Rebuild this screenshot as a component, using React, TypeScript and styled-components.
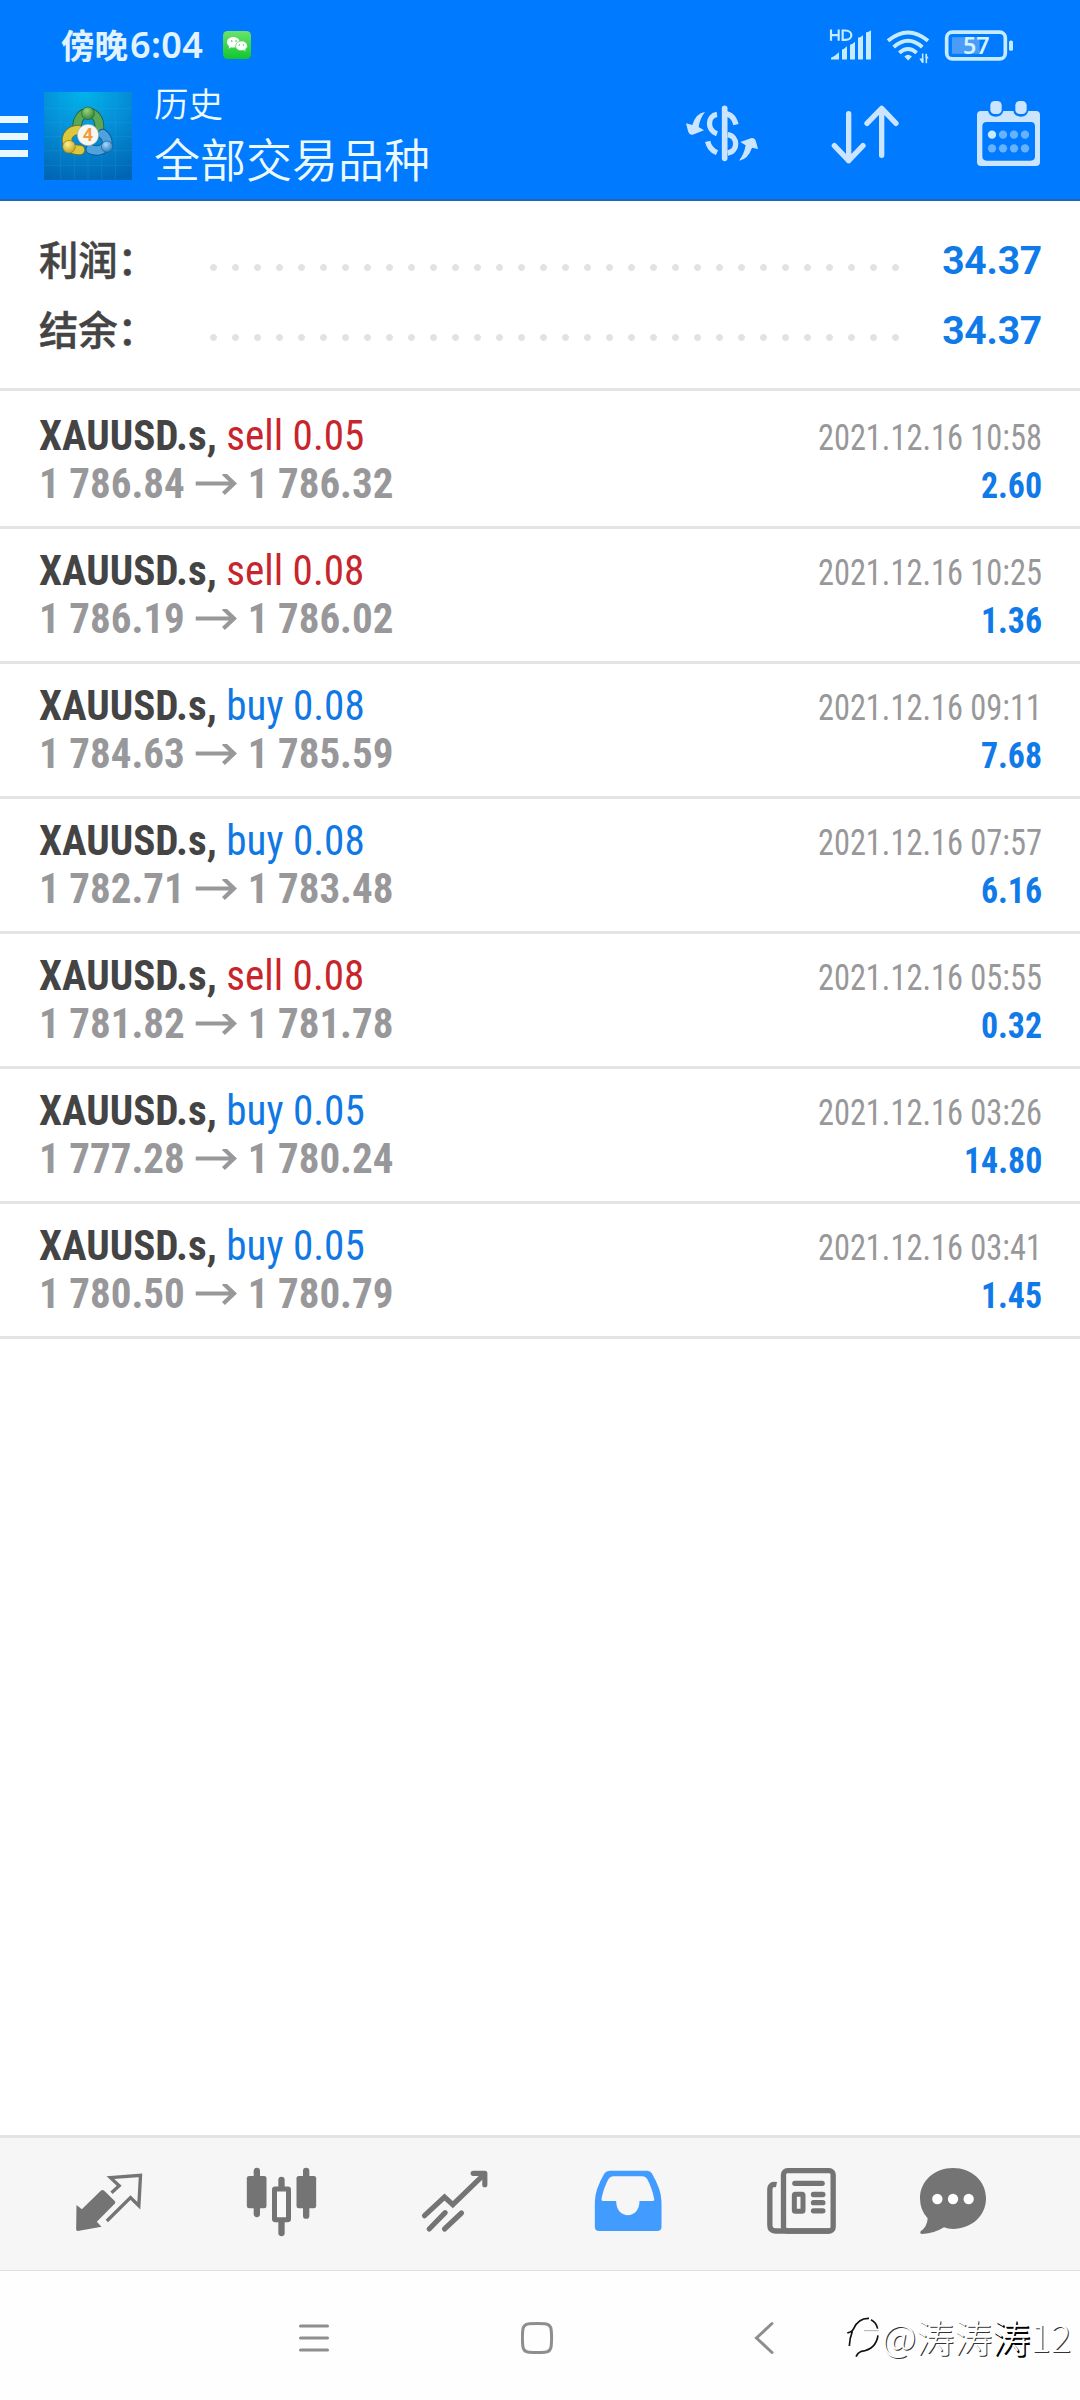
import React from 'react';
import styled, { createGlobalStyle } from 'styled-components';

const GlobalStyle = createGlobalStyle`
  * { box-sizing: border-box; }
  body { margin: 0; background: #fff; }
`;

const cjk = `"Noto Sans CJK SC", sans-serif`;
const condensed = `"Roboto Condensed", Roboto, ${cjk}`;

const Screen = styled.div`
  width: 1080px;
  height: 2400px;
  display: flex;
  flex-direction: column;
  background: #fff;
  overflow: hidden;
  font-family: Roboto, ${cjk};
`;

const Header = styled.header`
  height: 201px;
  flex: none;
  background: #007aff;
  border-bottom: 2px solid #1c68b4;
`;

const StatusBar = styled.div`
  height: 90px;
  display: flex;
  align-items: center;
  padding: 0 65px 0 61px;
`;

const Clock = styled.div`
  display: flex;
  align-items: baseline;
  margin-bottom: 2px;
  color: #e2f3ff;
  font: 700 33.5px/44px ${cjk};
  white-space: nowrap;
`;

const Digits = styled.span`
  font: 600 36px/44px "Noto Sans", sans-serif;
  letter-spacing: 0.4px;
  margin-left: 2px;
`;

const WeChat = styled.svg`
  width: 28px;
  height: 28px;
  margin-left: 20px;
`;

const StatusIcons = styled.div`
  margin-left: auto;
  display: flex;
  gap: 12px;
  color: #c4ebff;
`;

const StatusIcon = styled.svg<{ $w: number }>`
  width: ${(p) => p.$w}px;
  height: 37px;
`;

const Toolbar = styled.div`
  height: 92px;
  display: flex;
  align-items: center;
  padding-right: 32px;
`;

const MenuButton = styled.div`
  width: 28px;
  display: flex;
  flex-direction: column;
  gap: 10px;
`;

const MenuBar = styled.span`
  height: 7px;
  background: #eaf8ff;
`;

const AppLogo = styled.svg`
  width: 88px;
  height: 88px;
  margin-left: 16px;
`;

const Titles = styled.div`
  margin: 0 0 6px 22px;
  flex: 1;
  color: #ecfaff;
  font-family: ${cjk};
  font-weight: 350;
`;

const Overline = styled.div`
  font-size: 34.5px;
  line-height: 48px;
`;

const Title = styled.div`
  font-size: 46px;
  line-height: 62px;
`;

const ToolIcons = styled.div`
  display: flex;
  gap: 68px;
  color: #cce5ff;
`;

const ToolIcon = styled.svg`
  width: 76px;
  height: 80px;
`;

const Summary = styled.section`
  height: 190px;
  flex: none;
  padding: 25px 38px 0 39px;
  border-bottom: 3px solid #e4e4e4;
`;

const SummaryRow = styled.div`
  height: 70px;
  display: flex;
  align-items: center;
`;

const SummaryLabel = styled.div`
  width: 171px;
  margin-bottom: 6px;
  font: 500 39.3px/64px ${cjk};
  color: #444;
  -webkit-text-stroke: 0.5px #444;
`;

const Leader = styled.div`
  flex: none;
  width: 704px;
  height: 7px;
  margin-top: 13px;
  background: radial-gradient(circle at 3.5px 3.5px, #e2e2e2 3px, transparent 3.8px) 0 0 / 22px 7px repeat-x;
`;

const SummaryValue = styled.div`
  margin-left: auto;
  font: 700 39px/70px Roboto, sans-serif;
  letter-spacing: -0.2px;
  color: #0f7ae8;
`;

const Deals = styled.main`
  flex: 1;
  padding-top: 3px;
`;

const Deal = styled.div`
  height: 135px;
  padding: 17px 38px 0 39px;
  border-bottom: 3px solid #e4e4e4;
  font-family: ${condensed};
  font-stretch: 75%;
`;

const Line = styled.div`
  height: 48px;
  line-height: 48px;
  display: flex;
  align-items: baseline;
  justify-content: space-between;
  white-space: nowrap;
`;

const Instrument = styled.div`
  font-size: 43px;
  font-weight: 700;
  color: #444;
  transform: scaleX(0.956);
  transform-origin: left;
`;

const Side = styled.span<{ $buy: boolean }>`
  font-weight: 400;
  color: ${(p) => (p.$buy ? '#1078e4' : '#c8242c')};
`;

const Prices = styled.div`
  font-size: 43px;
  font-weight: 700;
  color: #98989a;
  transform: scaleX(0.954);
  transform-origin: left;
`;

const PriceArrow = styled.svg`
  width: 44px;
  height: 24px;
  margin: 0 11px 0 11px;
`;

const Time = styled.div`
  font-size: 36px;
  color: #98989a;
  transform: scaleX(0.9);
  transform-origin: right;
`;

const Profit = styled.div`
  font-size: 36px;
  font-weight: 700;
  color: #0f7ae8;
  transform: scaleX(0.94);
  transform-origin: right;
`;

const TabBar = styled.nav`
  height: 136px;
  flex: none;
  display: grid;
  grid-template-columns: repeat(5, 173px) 132px;
  justify-items: center;
  padding: 22px 0 0 22px;
  background: #f6f6f6;
  border-top: 3px solid #e4e4e4;
  border-bottom: 1px solid #e0e0e0;
`;

const TabIcon = styled.svg<{ $active?: boolean }>`
  width: 84px;
  height: 84px;
  color: ${(p) => (p.$active ? '#429cff' : '#747474')};
`;

const SystemNav = styled.div`
  position: relative;
  height: 129px;
  flex: none;
  display: flex;
  align-items: center;
  padding: 5px 0 0 296px;
  gap: 189px;
  background: #fefefe;
`;

const NavIcon = styled.svg`
  width: 36px;
  height: 36px;
  fill: none;
  stroke: #8e8e8e;
  stroke-width: 3;
  stroke-linecap: round;
`;

const Watermark = styled.div`
  position: absolute;
  right: 9px;
  bottom: 37px;
  display: flex;
  align-items: center;
  font: 300 38px/54px ${cjk};
  color: #fff;
  text-shadow: 1px 1px 0.5px #333;
`;

const WatermarkStrong = styled.span`
  text-shadow: 1px 1px 0 #000, 1.5px 1.5px 0 #000;
`;

const WatermarkLogo = styled.svg`
  width: 36px;
  height: 44px;
`;

const deals = [
  { side: 'sell', lot: '0.05', open: '1 786.84', close: '1 786.32', time: '2021.12.16 10:58', profit: '2.60' },
  { side: 'sell', lot: '0.08', open: '1 786.19', close: '1 786.02', time: '2021.12.16 10:25', profit: '1.36' },
  { side: 'buy', lot: '0.08', open: '1 784.63', close: '1 785.59', time: '2021.12.16 09:11', profit: '7.68' },
  { side: 'buy', lot: '0.08', open: '1 782.71', close: '1 783.48', time: '2021.12.16 07:57', profit: '6.16' },
  { side: 'sell', lot: '0.08', open: '1 781.82', close: '1 781.78', time: '2021.12.16 05:55', profit: '0.32' },
  { side: 'buy', lot: '0.05', open: '1 777.28', close: '1 780.24', time: '2021.12.16 03:26', profit: '14.80' },
  { side: 'buy', lot: '0.05', open: '1 780.50', close: '1 780.79', time: '2021.12.16 03:41', profit: '1.45' },
];

const WeChatIcon = () => (
  <WeChat viewBox="0 0 84 84">
    <defs>
      <linearGradient id="wc" x1="0" y1="0" x2="0" y2="1">
        <stop offset="0" stopColor="#6be36c" />
        <stop offset="1" stopColor="#10c62f" />
      </linearGradient>
    </defs>
    <rect width="84" height="84" rx="14" fill="url(#wc)" />
    <path d="M31 18c-11 0-19 7-19 16 0 5 3 9 7 12l-2 7 7-4c9 2 26 1 26-15 0-9-8-16-19-16z" fill="#fff" />
    <path d="M55 30c10 0 18 6 18 15 0 5-3 8-6 10l2 7-7-4c-12 3-24-2-24-13 0-9 8-15 17-15z" fill="#fff" stroke="#47d552" strokeWidth="2" />
    <g fill="#3fcf4e">
      <circle cx="26" cy="30" r="2.6" /><circle cx="39" cy="30" r="2.6" />
      <circle cx="49" cy="42" r="2.2" /><circle cx="61" cy="42" r="2.2" />
    </g>
  </WeChat>
);

const SignalIcon = () => (
  <StatusIcon $w={45} viewBox="504 79.5 135 111" fill="currentColor">
    <g fill="none" stroke="currentColor" strokeWidth="6.5">
      <path d="M513 87v34M536 87v34M513 104h23M548 90v28h8c24 0 24-28 0-28z" />
    </g>
    <path d="M513 172q10-4 24-17v22h-24zM546 147q6-1 15-10v40h-15zM570 133q8-2 15-9v53h-15zM594 112q8-2 15-8v73h-15zM618 96q8-2 15-7v88h-15z" />
  </StatusIcon>
);

const WifiIcon = () => (
  <StatusIcon $w={46} viewBox="675 79.5 138 111" fill="none" stroke="currentColor" strokeWidth="11.5">
    <path d="M684 121Q744 71 804 121M701 140Q744 102 787 140M718 157Q744 134 770 157" />
    <path d="M733 168q11-11 23 0l-11.500 12z" fill="currentColor" stroke="none" />
    <path d="M788 159v28M799 160v28" strokeWidth="4.500" />
    <path d="M778 174l8 13h4v-13zM797 160l9 14h-9z" fill="currentColor" stroke="none" />
  </StatusIcon>
);

const BatteryText = styled.text`
  font: 600 70px "Noto Sans", sans-serif;
`;

const BatteryIcon = () => (
  <StatusIcon $w={72} viewBox="849 79.5 216 111">
    <rect x="876" y="110" width="83" height="50" fill="#4a9cf6" />
    <rect x="860" y="95" width="176" height="80" rx="17" fill="none" stroke="currentColor" strokeWidth="11" />
    <rect x="1047" y="120" width="12" height="31" rx="5" fill="currentColor" />
    <BatteryText x="949" y="161" textAnchor="middle" textLength="80" lengthAdjust="spacingAndGlyphs" fill="#d4f2ff">57</BatteryText>
  </StatusIcon>
);

const LogoText = styled.text`
  font: 700 52px "Open Sans", sans-serif;
`;

const Logo = () => (
  <AppLogo viewBox="42 36 264 264">
    <defs>
      <radialGradient id="bg" cx="0.45" cy="0" r="1.05">
        <stop offset="0" stopColor="#00b4ea" />
        <stop offset="0.45" stopColor="#0590d8" />
        <stop offset="1" stopColor="#0066b4" />
      </radialGradient>
      <radialGradient id="gr" cx="0.4" cy="0.3" r="0.8"><stop offset="0" stopColor="#9ad47c" /><stop offset="1" stopColor="#2a7a32" /></radialGradient>
      <radialGradient id="ye" cx="0.4" cy="0.3" r="0.8"><stop offset="0" stopColor="#fff08a" /><stop offset="1" stopColor="#b89a1c" /></radialGradient>
      <radialGradient id="bl" cx="0.4" cy="0.3" r="0.8"><stop offset="0" stopColor="#a6dcff" /><stop offset="1" stopColor="#1a6cb0" /></radialGradient>
    </defs>
    <rect x="42" y="36" width="264" height="264" fill="url(#bg)" />
    <path d="M92 36v264M133 36v264M174 36v264M215 36v264M256 36v264M42 86h264M42 128h264M42 170h264M42 212h264M42 256h264" stroke="#35b4e8" strokeOpacity="0.28" strokeWidth="2" />
    <g fill="none" strokeLinecap="round">
      <path d="M142 146C136 84 212 80 208 146" stroke="#1f5a48" strokeWidth="29" />
      <path d="M142 146C136 84 212 80 208 146" stroke="#5aa854" strokeWidth="24" />
      <path d="M144 150C100 152 98 212 150 210" stroke="#6c7430" strokeWidth="31" />
      <path d="M144 150C100 152 98 212 150 210" stroke="#dcc83c" strokeWidth="26" />
      <path d="M218 162C252 190 216 222 182 208" stroke="#105490" strokeWidth="31" />
      <path d="M218 162C252 190 216 222 182 208" stroke="#4ea2de" strokeWidth="26" />
    </g>
    <circle cx="174" cy="100" r="19" fill="url(#gr)" stroke="#216a30" strokeWidth="2" />
    <circle cx="117" cy="200" r="19" fill="url(#ye)" stroke="#867820" strokeWidth="2" />
    <circle cx="231" cy="200" r="17" fill="url(#bl)" stroke="#1a6098" strokeWidth="2" />
    <circle cx="174" cy="165" r="32" fill="#f6f6f2" stroke="#8a9a90" strokeWidth="1.500" />
    <LogoText x="174" y="184" textAnchor="middle" fill="#f39a3a">4</LogoText>
  </AppLogo>
);

const DollarIcon = () => (
  <ToolIcon viewBox="72 288 228 240" fill="currentColor">
    <path d="M194 325v150" stroke="currentColor" strokeWidth="17" strokeLinecap="round" />
    <g fill="none" stroke="currentColor" strokeWidth="16">
      <path d="M171 343C143 347 139 390 171 401M143 424Q148 448 171 458" />
      <path d="M194 341Q220 342 228 374M203 404C234 408 236 454 203 459" />
    </g>
    <path d="M135 336Q108 339 97 375L78 370 84 393Q87 405 98 404L132 391 116 381Q120 354 135 336z" />
    <path d="M237 482Q264 478 276 443L294 447 288 425Q285 413 275 414L241 426 257 436Q252 464 237 482z" />
  </ToolIcon>
);

const SortIcon = () => (
  <ToolIcon viewBox="504 288 228 240" fill="none" stroke="currentColor" strokeWidth="16" strokeLinecap="round" strokeLinejoin="round">
    <path d="M566 341v141M523 437l43 45 43-45M665 466V325M621 370l44-45 43 45" />
  </ToolIcon>
);

const CalendarIcon = () => (
  <ToolIcon viewBox="936 288 228 240">
    <path d="M963 333H984Q988 350 1007 350 1026 350 1030 333H1060Q1064 350 1083 350 1101 350 1105 333H1128Q1140 333 1140 345V486Q1140 498 1128 498H963Q951 498 951 486V345Q951 333 963 333zM980 366Q967 366 967 379V469Q967 482 980 482H1112Q1125 482 1125 469V379Q1125 366 1112 366z" fill="currentColor" fillRule="evenodd" />
    <rect x="991" y="303" width="34" height="39" rx="13" fill="currentColor" />
    <rect x="1066" y="303" width="34" height="39" rx="13" fill="currentColor" />
    {[0, 1, 2, 3, 4, 5, 6, 7].map((i) => (
      <circle key={i} cx={996 + (i % 4) * 33} cy={i < 4 ? 404 : 445} r="12.5" fill={i === 0 ? '#c8ecff' : '#66b2ff'} />
    ))}
  </ToolIcon>
);

const QuotesIcon = () => (
  <TabIcon viewBox="19.5 90 252 252">
    <path d="M48 225L64 238 120 183Q126 177 132 183L162 212Q167 218 161 223L109 275 123 290 52 303Q46 303 47 297z" fill="currentColor" />
    <path d="M153 188L176 167 150 143 240 136 235 227 210 203 139 273" fill="none" stroke="currentColor" strokeWidth="10" />
  </TabIcon>
);

const ChartIcon = () => (
  <TabIcon viewBox="538.5 90 252 252">
    <g stroke="currentColor" strokeWidth="19" strokeLinecap="round">
      <path d="M589 123v129M737 123v134M663 150v25M663 275v34" />
    </g>
    <rect x="559" y="138" width="59" height="97" rx="7" fill="currentColor" />
    <rect x="708" y="138" width="59" height="97" rx="7" fill="currentColor" />
    <rect x="642" y="177" width="42" height="92" rx="2" fill="#f8f8f8" stroke="currentColor" strokeWidth="15" />
  </TabIcon>
);

const TrendIcon = () => (
  <TabIcon viewBox="1057.5 90 252 252" fill="none" stroke="currentColor" strokeWidth="15.5" strokeLinecap="round" strokeLinejoin="miter">
    <path d="M1092 257L1152 201 1177 224 1270 134M1106 297L1154 248M1152 297L1203 249" />
    <path d="M1238 130H1273V164" strokeLinejoin="round" />
  </TabIcon>
);

const HistoryIcon = () => (
  <TabIcon $active viewBox="16.5 90 252 252" fill="currentColor">
    <path fillRule="evenodd" d="M88 122H200Q209 122 214 130 243 180 243 215V290Q243 303 230 303H56Q43 303 43 290V215Q43 180 72 130 77 122 88 122zM98 139Q89 139 84 147 70 172 63 206 62 213 70 213H107C107 270 177 270 177 213H214Q223 213 221 206 214 172 200 147 195 139 187 139z" />
  </TabIcon>
);

const NewsIcon = () => (
  <TabIcon viewBox="535.5 90 252 252" fill="none" stroke="currentColor" strokeWidth="16">
    <path d="M588 164Q568 160 568 180V286Q568 303 585 303H748" />
    <rect x="609" y="122" width="149" height="181" rx="12" />
    <path d="M643 160H725M699 193.500H727M699 218H727M699 242.500H727" strokeLinecap="round" />
    <rect x="641.5" y="192.500" width="26" height="51" rx="3" strokeWidth="15" />
  </TabIcon>
);

const ChatIcon = () => (
  <TabIcon viewBox="993 90 252 252" fill="currentColor">
    <path d="M1119 114C1174 114 1218 152 1218 205S1174 297 1119 297Q1103 297 1092 292 1064 310 1027 312 1018 312 1022 304 1042 290 1043 265 1020 241 1020 205C1020 152 1064 114 1119 114z" />
    <g fill="#fff"><circle cx="1072" cy="207" r="15.500" /><circle cx="1119" cy="207" r="15.500" /><circle cx="1166" cy="207" r="15.500" /></g>
  </TabIcon>
);

export default function App() {
  return (
    <Screen>
      <GlobalStyle />
      <Header>
        <StatusBar>
          <Clock>傍晚<Digits>6:04</Digits></Clock>
          <WeChatIcon />
          <StatusIcons>
            <SignalIcon />
            <WifiIcon />
            <BatteryIcon />
          </StatusIcons>
        </StatusBar>
        <Toolbar>
          <MenuButton><MenuBar /><MenuBar /><MenuBar /></MenuButton>
          <Logo />
          <Titles>
            <Overline>历史</Overline>
            <Title>全部交易品种</Title>
          </Titles>
          <ToolIcons>
            <DollarIcon />
            <SortIcon />
            <CalendarIcon />
          </ToolIcons>
        </Toolbar>
      </Header>
      <Summary>
        <SummaryRow>
          <SummaryLabel>利润：</SummaryLabel>
          <Leader />
          <SummaryValue>34.37</SummaryValue>
        </SummaryRow>
        <SummaryRow>
          <SummaryLabel>结余：</SummaryLabel>
          <Leader />
          <SummaryValue>34.37</SummaryValue>
        </SummaryRow>
      </Summary>
      <Deals>
        {deals.map((d) => (
          <Deal key={d.time}>
            <Line>
              <Instrument>XAUUSD.s, <Side $buy={d.side === 'buy'}>{d.side} {d.lot}</Side></Instrument>
              <Time>{d.time}</Time>
            </Line>
            <Line>
              <Prices>
                {d.open}
                <PriceArrow viewBox="0 0 42 24" preserveAspectRatio="none" fill="none" stroke="currentColor" strokeWidth="4.2">
                  <path d="M0 9.500H38M28 -0.500L38.500 9.500 28 19.500" />
                </PriceArrow>
                {d.close}
              </Prices>
              <Profit>{d.profit}</Profit>
            </Line>
          </Deal>
        ))}
      </Deals>
      <TabBar>
        <QuotesIcon />
        <ChartIcon />
        <TrendIcon />
        <HistoryIcon />
        <NewsIcon />
        <ChatIcon />
      </TabBar>
      <SystemNav>
        <NavIcon viewBox="0 0 36 36"><path d="M4.500 6h27M4.500 18h27M4.500 30h27" /></NavIcon>
        <NavIcon viewBox="2 0 36 36"><path d="M10 3.800Q18 3 26 3.800 31.700 4.300 32.200 10 33 18 32.200 26 31.700 31.700 26 32.200 18 33 10 32.200 4.300 31.700 3.800 26 3 18 3.800 10 4.300 4.300 10 3.800z" /></NavIcon>
        <NavIcon viewBox="0 0 36 36"><path d="M26 3.500L10.500 18 26 32.500" /></NavIcon>
        <Watermark>
          <WatermarkLogo viewBox="318 60 108 132" fill="none" stroke="#111" strokeWidth="5">
            <path d="M322 117l9-3q7-2 10-10 14-32 46-31M337 112q-8 20-9 44M393 77q16 8 20 27M414 124q-6 42-50 48-10 4-16 16" />
            <path d="M372 110h44" strokeWidth="2" stroke="#888" />
          </WatermarkLogo>
          @涛涛<WatermarkStrong>涛</WatermarkStrong>12
        </Watermark>
      </SystemNav>
    </Screen>
  );
}
